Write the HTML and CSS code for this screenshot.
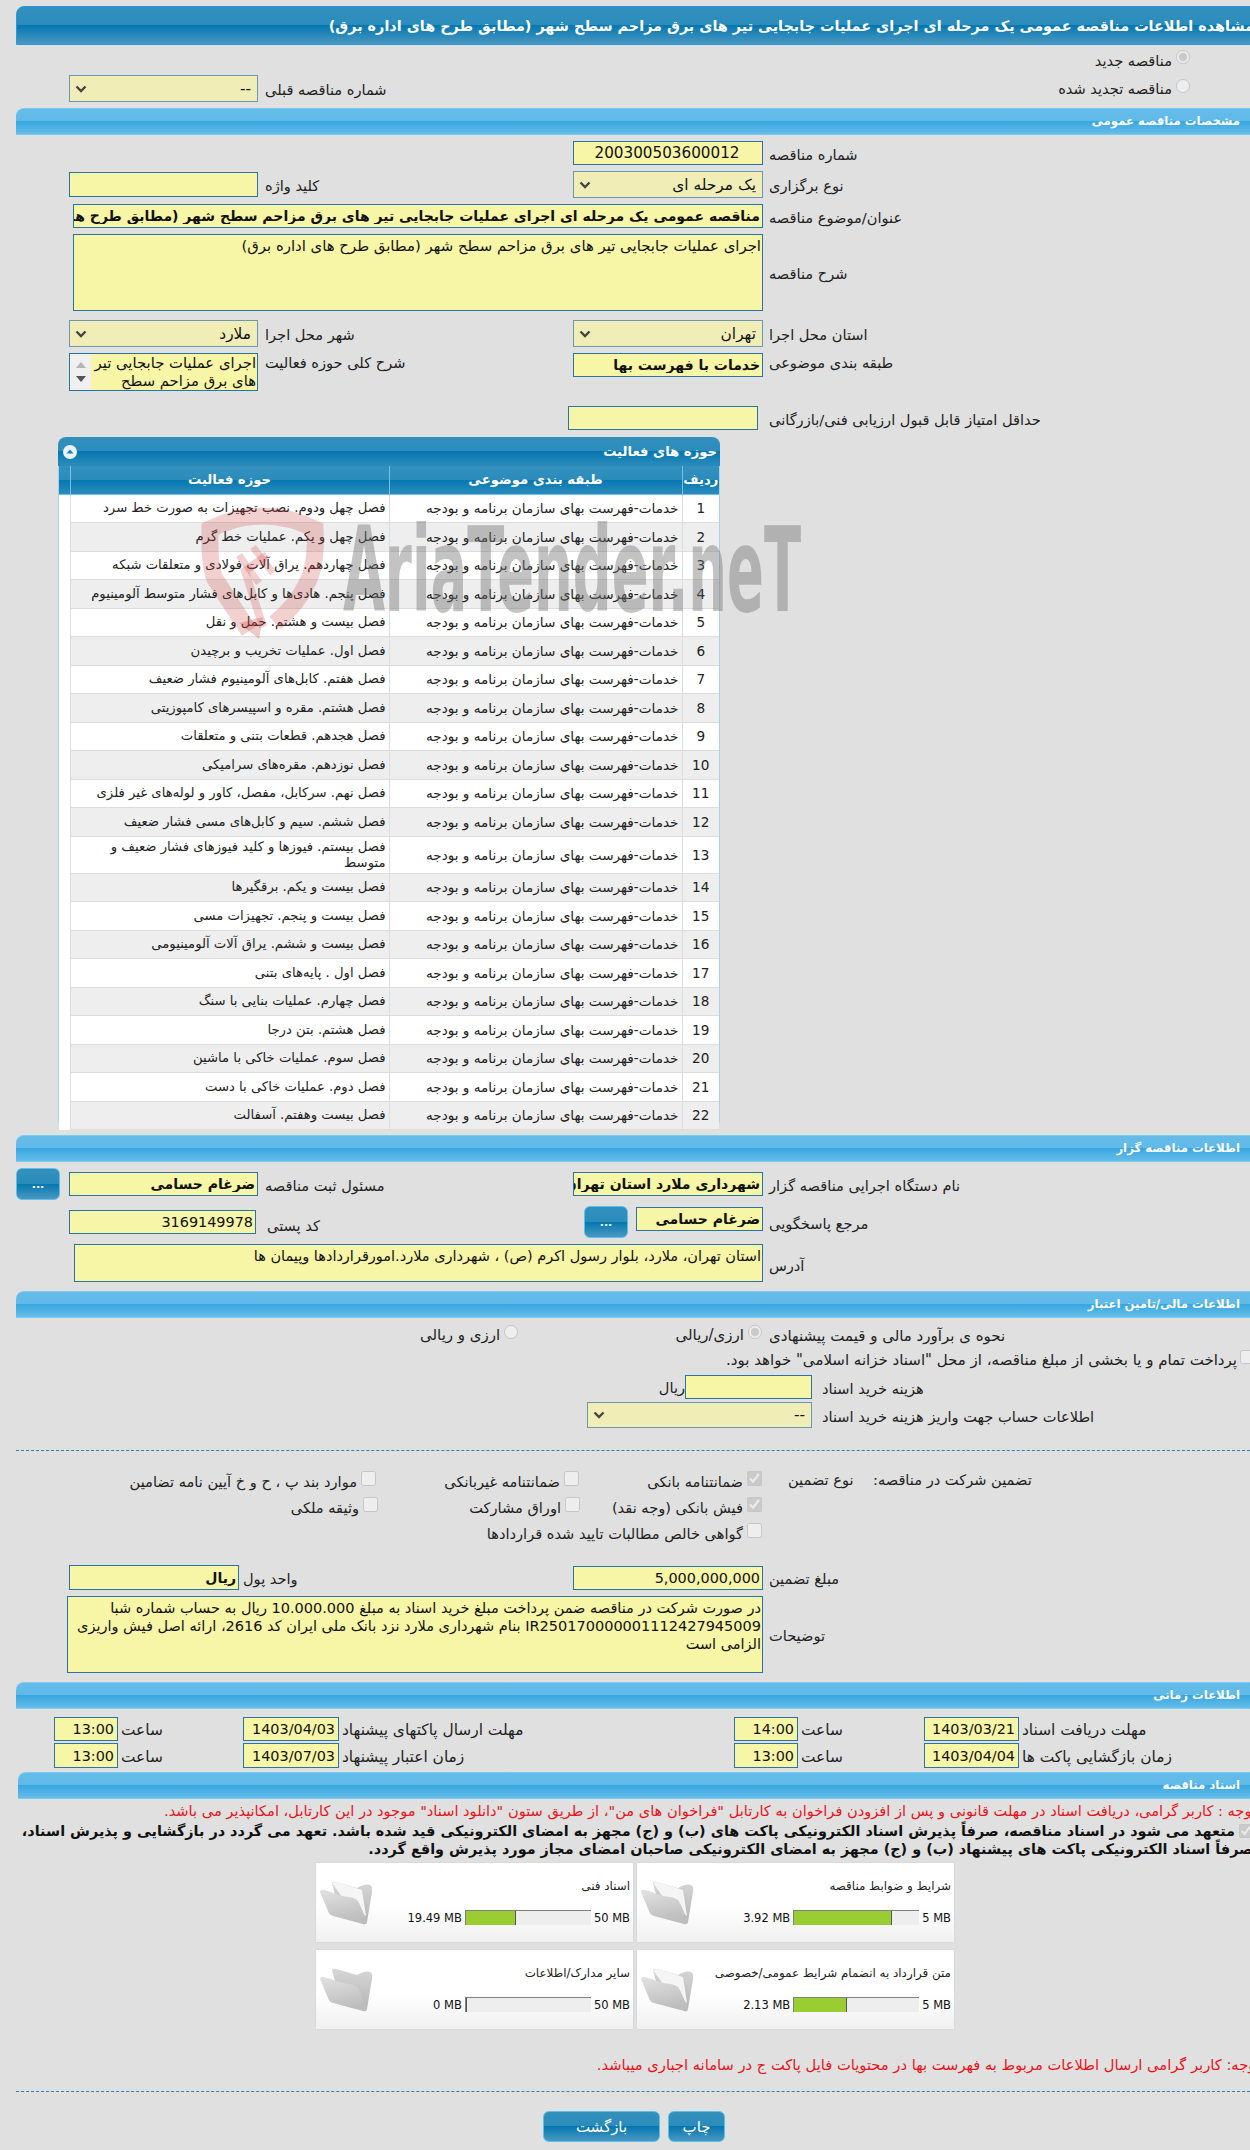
FILE: index.html
```html
<!DOCTYPE html>
<html lang="fa">
<head>
<meta charset="utf-8">
<title>مشاهده اطلاعات مناقصه</title>
<link rel="stylesheet" href="styles.css">
</head>
<body>
<svg class="defs" width="0" height="0" aria-hidden="true">
  <defs>
    <linearGradient id="fgFront" x1="0" y1="0" x2="0.3" y2="1"><stop offset="0" stop-color="#e2e2e2"/><stop offset="1" stop-color="#bdbdbd"/></linearGradient>
    <linearGradient id="fgBack" x1="0" y1="0" x2="0" y2="1"><stop offset="0" stop-color="#d6d6d6"/><stop offset="1" stop-color="#b4b4b4"/></linearGradient>
    <symbol id="folderFull" viewBox="0 0 54 46">
      <path d="M13 3 Q14 1 17 2 L31 6 Q34 7 38 8 Q46 3 51 5 Q54 6 53 12 L48 42 Q47 45 44 44 L20 30 Z" fill="url(#fgBack)"/>
      <path d="M13 3 L17 2 L43 10 L47 36 L25 20 Z" fill="#f5f5f5"/>
      <path d="M1 12 Q1 9 5 10 L12 12 Q20 16 30 17 Q38 18 40 23 L48 41 Q48 45 44 44 L14 36 Q10 35 9 31 Z" fill="url(#fgFront)"/>
    </symbol>
    <symbol id="folderEmpty" viewBox="0 0 54 46">
      <path d="M13 3 Q14 1 17 2 L31 6 Q34 7 38 8 Q46 3 51 5 Q54 6 53 12 L48 42 Q47 45 44 44 L20 30 Z" fill="url(#fgBack)"/>
      <path d="M1 12 Q1 9 5 10 L12 12 Q20 16 30 17 Q38 18 40 23 L48 41 Q48 45 44 44 L14 36 Q10 35 9 31 Z" fill="url(#fgFront)"/>
    </symbol>
  </defs>
</svg>

<div class="page">
  <div class="title-bar"><h1 class="title-text">مشاهده اطلاعات مناقصه عمومی یک مرحله ای اجرای عملیات جابجایی تیر های برق مزاحم سطح شهر (مطابق طرح های اداره برق)</h1></div>

  <div class="radio-row r-new">
    <label class="radio-label"><input type="radio" name="kind" checked disabled><span>مناقصه جدید</span></label>
  </div>
  <div class="form-row r-prev">
    <select class="sel c-left" disabled><option>--</option></select>
    <span class="lbl l-left">شماره مناقصه قبلی</span>
    <label class="radio-label end"><input type="radio" name="kind" disabled><span>مناقصه تجدید شده</span></label>
  </div>

  <div class="section-bar mt6">مشخصات مناقصه عمومی</div>

  <div class="form-row h24 mt6">
    <input class="fld num c-right" value="200300503600012" readonly dir="rtl">
    <span class="lbl l-right">شماره مناقصه</span>
  </div>
  <div class="form-row h27 mt6">
    <input class="fld c-left h25" readonly>
    <span class="lbl l-left">کلید واژه</span>
    <select class="sel c-right" disabled><option>یک مرحله ای</option></select>
    <span class="lbl l-right">نوع برگزاری</span>
  </div>
  <div class="form-row h24 mt6">
    <input class="fld c-wide bold" value="مناقصه عمومی یک مرحله ای اجرای عملیات جابجایی تیر های برق مزاحم سطح شهر (مطابق طرح های اداره برق)" readonly>
    <span class="lbl l-right">عنوان/موضوع مناقصه</span>
  </div>
  <div class="form-row h77 mt6">
    <textarea class="fld area c-wide" readonly>اجرای عملیات جابجایی تیر های برق مزاحم سطح شهر (مطابق طرح های اداره برق)</textarea>
    <span class="lbl l-right">شرح مناقصه</span>
  </div>
  <div class="form-row h27 mt9">
    <select class="sel c-left" disabled><option>ملارد</option></select>
    <span class="lbl l-left">شهر محل اجرا</span>
    <select class="sel c-right" disabled><option>تهران</option></select>
    <span class="lbl l-right">استان محل اجرا</span>
  </div>
  <div class="form-row h38 mt6 top">
    <div class="scopebox c-left">
      <div class="fake-scroll"><i class="arrow up"></i><i class="arrow down"></i></div>
      <div class="scope-text">اجرای عملیات جابجایی تیر های برق مزاحم سطح</div>
    </div>
    <span class="lbl l-left top-lbl">شرح کلی حوزه فعالیت</span>
    <input class="fld c-right bold" value="خدمات با فهرست بها" readonly>
    <span class="lbl l-right top-lbl">طبقه بندی موضوعی</span>
  </div>
  <div class="form-row h24 mt15">
    <input class="fld c-score" readonly>
    <span class="lbl l-right">حداقل امتیاز قابل قبول ارزیابی فنی/بازرگانی</span>
  </div>

  <section class="panel">
    <div class="panel-head">
      <span class="panel-title">حوزه های فعالیت</span>
      <span class="collapse"><svg width="14" height="14" viewBox="0 0 14 14"><circle cx="7" cy="7" r="7" fill="#e9f2f7"/><path d="M3.5 8.5 L7 4.5 L10.5 8.5 Z" fill="#1b7fb0"/></svg></span>
    </div>
    <table class="grid">
      <colgroup><col class="c1"><col class="c2"><col class="c3"><col class="c4"></colgroup>
      <thead><tr><th>ردیف</th><th>طبقه بندی موضوعی</th><th>حوزه فعالیت</th><th></th></tr></thead>
      <tbody>
        <tr><td class="n">1</td><td>خدمات-فهرست بهای سازمان برنامه و بودجه</td><td>فصل چهل ودوم. نصب تجهیزات به صورت خط سرد</td><td class="blank"></td></tr>
        <tr><td class="n">2</td><td>خدمات-فهرست بهای سازمان برنامه و بودجه</td><td>فصل چهل و یکم. عملیات خط گرم</td><td class="blank"></td></tr>
        <tr><td class="n">3</td><td>خدمات-فهرست بهای سازمان برنامه و بودجه</td><td>فصل چهاردهم. یراق آلات فولادی و متعلقات شبکه</td><td class="blank"></td></tr>
        <tr><td class="n">4</td><td>خدمات-فهرست بهای سازمان برنامه و بودجه</td><td>فصل پنجم. هادی‌ها و کابل‌های فشار متوسط آلومینیوم</td><td class="blank"></td></tr>
        <tr><td class="n">5</td><td>خدمات-فهرست بهای سازمان برنامه و بودجه</td><td>فصل بیست و هشتم. حمل و نقل</td><td class="blank"></td></tr>
        <tr><td class="n">6</td><td>خدمات-فهرست بهای سازمان برنامه و بودجه</td><td>فصل اول. عملیات تخریب و برچیدن</td><td class="blank"></td></tr>
        <tr><td class="n">7</td><td>خدمات-فهرست بهای سازمان برنامه و بودجه</td><td>فصل هفتم. کابل‌های آلومینیوم فشار ضعیف</td><td class="blank"></td></tr>
        <tr><td class="n">8</td><td>خدمات-فهرست بهای سازمان برنامه و بودجه</td><td>فصل هشتم. مقره و اسپیسرهای کامپوزیتی</td><td class="blank"></td></tr>
        <tr><td class="n">9</td><td>خدمات-فهرست بهای سازمان برنامه و بودجه</td><td>فصل هجدهم. قطعات بتنی و متعلقات</td><td class="blank"></td></tr>
        <tr><td class="n">10</td><td>خدمات-فهرست بهای سازمان برنامه و بودجه</td><td>فصل نوزدهم. مقره‌های سرامیکی</td><td class="blank"></td></tr>
        <tr><td class="n">11</td><td>خدمات-فهرست بهای سازمان برنامه و بودجه</td><td>فصل نهم. سرکابل، مفصل، کاور و لوله‌های غیر فلزی</td><td class="blank"></td></tr>
        <tr><td class="n">12</td><td>خدمات-فهرست بهای سازمان برنامه و بودجه</td><td>فصل ششم. سیم و کابل‌های مسی فشار ضعیف</td><td class="blank"></td></tr>
        <tr class="tall"><td class="n">13</td><td>خدمات-فهرست بهای سازمان برنامه و بودجه</td><td>فصل بیستم. فیوزها و کلید فیوزهای فشار ضعیف و متوسط</td><td class="blank"></td></tr>
        <tr><td class="n">14</td><td>خدمات-فهرست بهای سازمان برنامه و بودجه</td><td>فصل بیست و یکم. برقگیرها</td><td class="blank"></td></tr>
        <tr><td class="n">15</td><td>خدمات-فهرست بهای سازمان برنامه و بودجه</td><td>فصل بیست و پنجم. تجهیزات مسی</td><td class="blank"></td></tr>
        <tr><td class="n">16</td><td>خدمات-فهرست بهای سازمان برنامه و بودجه</td><td>فصل بیست و ششم. یراق آلات آلومینیومی</td><td class="blank"></td></tr>
        <tr><td class="n">17</td><td>خدمات-فهرست بهای سازمان برنامه و بودجه</td><td>فصل اول . پایه‌های بتنی</td><td class="blank"></td></tr>
        <tr><td class="n">18</td><td>خدمات-فهرست بهای سازمان برنامه و بودجه</td><td>فصل چهارم. عملیات بنایی با سنگ</td><td class="blank"></td></tr>
        <tr><td class="n">19</td><td>خدمات-فهرست بهای سازمان برنامه و بودجه</td><td>فصل هشتم. بتن درجا</td><td class="blank"></td></tr>
        <tr><td class="n">20</td><td>خدمات-فهرست بهای سازمان برنامه و بودجه</td><td>فصل سوم. عملیات خاکی با ماشین</td><td class="blank"></td></tr>
        <tr><td class="n">21</td><td>خدمات-فهرست بهای سازمان برنامه و بودجه</td><td>فصل دوم. عملیات خاکی با دست</td><td class="blank"></td></tr>
        <tr><td class="n">22</td><td>خدمات-فهرست بهای سازمان برنامه و بودجه</td><td>فصل بیست وهفتم. آسفالت</td><td class="blank"></td></tr>
      </tbody>
    </table>
    <svg class="watermark" width="610" height="145" viewBox="0 0 610 145" aria-hidden="true">
      <g fill="none" stroke="#c83c3c" stroke-opacity=".24">
        <path d="M48 132 L14 80 Q8 66 9 30 Q62 4 114 30 Q116 66 106 84 Q96 106 74 124" stroke-width="17"/>
        <path d="M66 56 L44 72 L62 128" stroke-width="8"/>
        <path d="M52 48 L72 74 M38 56 L58 84" stroke-width="7"/>
      </g>
      <path d="M38 124 L62 118 L58 140 Z" fill="#c83c3c" fill-opacity=".28"/>
      <text class="wm-text" x="142" y="112" textLength="458" lengthAdjust="spacingAndGlyphs">AriaTender.neT</text>
    </svg>
  </section>

  <div class="section-bar mt7">اطلاعات مناقصه گزار</div>

  <div class="form-row h32 mt6">
    <button class="dots c-btn" type="button">...</button>
    <input class="fld c-left bold" value="ضرغام حسامی" readonly>
    <span class="lbl l-left">مسئول ثبت مناقصه</span>
    <input class="fld c-right bold" value="شهرداری ملارد استان تهران" readonly>
    <span class="lbl l-right">نام دستگاه اجرایی مناقصه گزار</span>
  </div>
  <div class="form-row h32 mt6">
    <input class="fld c-post" value="3169149978" readonly>
    <span class="lbl l-post">کد پستی</span>
    <div class="ref-wrap">
      <button class="dots" type="button">...</button>
      <input class="fld ref-input bold" value="ضرغام حسامی" readonly>
    </div>
    <span class="lbl l-right">مرجع پاسخگویی</span>
  </div>
  <div class="form-row h38 mt6">
    <textarea class="fld area c-addr" readonly>استان تهران، ملارد، بلوار رسول اکرم (ص) ، شهرداری ملارد.امورقراردادها وپیمان ها</textarea>
    <span class="lbl l-right lower">آدرس</span>
  </div>

  <div class="section-bar mt9">اطلاعات مالی/تامین اعتبار</div>

  <div class="form-row h24 mt5 finance">
    <label class="radio-label fin-2"><input type="radio" name="cur" disabled><span>ارزی و ریالی</span></label>
    <label class="radio-label fin-1"><input type="radio" name="cur" checked disabled><span>ارزی/ریالی</span></label>
    <span class="lbl l-right">نحوه ی برآورد مالی و قیمت پیشنهادی</span>
  </div>
  <div class="treasury mt1">
    <input type="checkbox" disabled>
    <span>پرداخت تمام و یا بخشی از مبلغ مناقصه، از محل "اسناد خزانه اسلامی" خواهد بود.</span>
  </div>
  <div class="buy-row h24 mt3">
    <span class="unit">ریال</span>
    <input class="fld buy-field" readonly>
    <span class="lbl buy-lbl">هزینه خرید اسناد</span>
  </div>
  <div class="buy-row h26 mt3">
    <select class="sel buy-sel" disabled><option>--</option></select>
    <span class="lbl buy-lbl">اطلاعات حساب جهت واریز هزینه خرید اسناد</span>
  </div>

  <hr class="dotted d1">

  <div class="guarantee">
    <div class="g-row">
      <label class="chk g3"><input type="checkbox" disabled><span>موارد بند پ ، ح و خ آیین نامه تضامین</span></label>
      <label class="chk g2"><input type="checkbox" disabled><span>ضمانتنامه غیربانکی</span></label>
      <label class="chk g1"><input type="checkbox" checked disabled><span>ضمانتنامه بانکی</span></label>
      <span class="lbl g-type">نوع تضمین</span>
      <span class="lbl g-head">تضمین شرکت در مناقصه:</span>
    </div>
    <div class="g-row">
      <label class="chk g3 alt3"><input type="checkbox" disabled><span>وثیقه ملکی</span></label>
      <label class="chk g2 alt2"><input type="checkbox" disabled><span>اوراق مشارکت</span></label>
      <label class="chk g1"><input type="checkbox" checked disabled><span>فیش بانکی (وجه نقد)</span></label>
    </div>
    <div class="g-row">
      <label class="chk g-span"><input type="checkbox" disabled><span>گواهی خالص مطالبات تایید شده قراردادها</span></label>
    </div>
  </div>

  <div class="form-row h25 mt19">
    <input class="fld c-cur bold" value="ریال" readonly>
    <span class="lbl l-cur">واحد پول</span>
    <input class="fld c-right" value="5,000,000,000" readonly dir="rtl">
    <span class="lbl l-right">مبلغ تضمین</span>
  </div>
  <div class="form-row h77 mt6">
    <textarea class="fld area c-notes" readonly>در صورت شرکت در مناقصه ضمن پرداخت مبلغ خرید اسناد به مبلغ 10.000.000 ریال به حساب شماره شبا IR250170000001112427945009 بنام شهرداری ملارد نزد بانک ملی ایران کد 2616، ارائه اصل فیش واریزی الزامی است</textarea>
    <span class="lbl l-right">توضیحات</span>
  </div>

  <div class="section-bar mt9">اطلاعات زمانی</div>

  <div class="time-row mt8 h24">
    <span></span>
    <input class="fld" value="13:00" readonly dir="rtl"><span class="lbl">ساعت</span>
    <input class="fld" value="1403/04/03" readonly dir="rtl"><span class="lbl">مهلت ارسال پاکتهای پیشنهاد</span>
    <input class="fld" value="14:00" readonly dir="rtl"><span class="lbl">ساعت</span>
    <input class="fld" value="1403/03/21" readonly dir="rtl"><span class="lbl">مهلت دریافت اسناد</span>
  </div>
  <div class="time-row mt2 h25">
    <span></span>
    <input class="fld" value="13:00" readonly dir="rtl"><span class="lbl">ساعت</span>
    <input class="fld" value="1403/07/03" readonly dir="rtl"><span class="lbl">زمان اعتبار پیشنهاد</span>
    <input class="fld" value="13:00" readonly dir="rtl"><span class="lbl">ساعت</span>
    <input class="fld" value="1403/04/04" readonly dir="rtl"><span class="lbl">زمان بازگشایی پاکت ها</span>
  </div>

  <div class="section-bar mt4 docs-bar">اسناد مناقصه</div>

  <p class="red-note n1">توجه : کاربر گرامی، دریافت اسناد در مهلت قانونی و پس از افزودن فراخوان به کارتابل "فراخوان های من"، از طریق ستون "دانلود اسناد" موجود در این کارتابل، امکانپذیر می باشد.</p>
  <p class="pledge"><input type="checkbox" checked disabled>متعهد می شود در اسناد مناقصه، صرفاً پذیرش اسناد الکترونیکی پاکت های (ب) و (ج) مجهز به امضای الکترونیکی قید شده باشد. تعهد می گردد در بازگشایی و پذیرش اسناد،<br>صرفاً اسناد الکترونیکی پاکت های پیشنهاد (ب) و (ج) مجهز به امضای الکترونیکی صاحبان امضای مجاز مورد پذیرش واقع گردد.</p>

  <div class="cards">
    <article class="card">
      <svg class="folder" width="54" height="46"><use href="#folderFull"/></svg>
      <div class="card-body">
        <div class="card-title">اسناد فنی</div>
        <div class="usage"><span>19.49 MB</span><span class="bar"><i class="fill" style="width:40%"></i></span><span>50 MB</span></div>
      </div>
    </article>
    <article class="card">
      <svg class="folder" width="54" height="46"><use href="#folderFull"/></svg>
      <div class="card-body">
        <div class="card-title">شرایط و ضوابط مناقصه</div>
        <div class="usage"><span>3.92 MB</span><span class="bar"><i class="fill" style="width:78.4%"></i></span><span>5 MB</span></div>
      </div>
    </article>
    <article class="card">
      <svg class="folder" width="54" height="46"><use href="#folderEmpty"/></svg>
      <div class="card-body">
        <div class="card-title">سایر مدارک/اطلاعات</div>
        <div class="usage"><span>0 MB</span><span class="bar"><i class="fill" style="width:0%"></i></span><span>50 MB</span></div>
      </div>
    </article>
    <article class="card">
      <svg class="folder" width="54" height="46"><use href="#folderFull"/></svg>
      <div class="card-body">
        <div class="card-title">متن قرارداد به انضمام شرایط عمومی/خصوصی</div>
        <div class="usage"><span>2.13 MB</span><span class="bar"><i class="fill" style="width:42.6%"></i></span><span>5 MB</span></div>
      </div>
    </article>
  </div>

  <p class="red-note n2">توجه: کاربر گرامی ارسال اطلاعات مربوط به فهرست بها در محتویات فایل پاکت ج در سامانه اجباری میباشد.</p>

  <hr class="dotted d2">

  <div class="actions">
    <button class="btn wide-btn" type="button">بازگشت</button>
    <button class="btn" type="button">چاپ</button>
  </div>
</div>
</body>
</html>
```
FILE: styles.css
```css
* { box-sizing: border-box; }
html, body { margin: 0; padding: 0; overflow: hidden; height: 2150px; }
body {
  width: 1250px;
  background: #e0e0e0;
  color: #222;
  font-family: "DejaVu Sans", sans-serif;
  font-size: 14.6px;
}
.defs { position: absolute; }
.page { width: 1250px; padding: 6px 0 0 16px; }

.mt1 { margin-top: 1px; } .mt2 { margin-top: 2px; } .mt3 { margin-top: 3px; }
.mt4 { margin-top: 4px; } .mt5 { margin-top: 5px; } .mt6 { margin-top: 6px; }
.mt7 { margin-top: 7px; } .mt8 { margin-top: 8px; } .mt9 { margin-top: 9px; }
.mt15 { margin-top: 15px; } .mt19 { margin-top: 19px; }
.h24 { height: 24px; } .h25 { height: 25px; } .h26 { height: 26px; } .h27 { height: 27px; }
.h32 { height: 32px; } .h38 { height: 38px; } .h77 { height: 77px; }

/* bars */
.title-bar {
  width: 1250px;
  height: 39px;
  padding-right: 16px;
  direction: rtl;
  overflow: hidden;
  display: flex;
  align-items: center;
  border: 1px solid #2a97e0;
  border-radius: 8px 0 0 0;
  background: linear-gradient(#3390bd 0, #2b8cbb 49%, #0577b0 50%, #4a98c1 100%);
}
.title-text {
  margin: 0 -5px 0 0;
  white-space: nowrap;
  color: #fff;
  font-size: 14.4px;
  font-weight: bold;
}
.section-bar {
  width: 1234px;
  height: 27px;
  padding: 0 10px 0 0;
  direction: rtl;
  border-top: 1px solid #79cdf1;
  border-bottom: 1px solid #79cdf1;
  border-radius: 8px 0 0 0;
  background: linear-gradient(#65bce9 0, #60b9e8 49%, #38a7e0 50%, #65bde9 100%);
  color: #fff;
  font-weight: bold;
  font-size: 11.7px;
  line-height: 25px;
}
.docs-bar { margin-left: 2px; width: 1232px; }

/* forms */
.form-row {
  display: grid;
  grid-template-columns: 53px 189px 315px 190px 1fr;
  align-items: center;
}
.form-row.top { align-items: start; }
.fld, .sel {
  font-family: inherit;
  font-size: 14.4px;
  color: #111;
  direction: rtl;
  border: 1px solid #2a74a5;
  background: #f7f5a6;
  padding: 0 2px 0 0;
  height: 24px;
  width: 100%;
  border-radius: 0;
  outline: none;
}
.fld.h25 { height: 25px; }
.num { font-size: 15.2px; text-align: center; }
.bold { font-weight: bold; font-size: 14px; }
.area { resize: none; overflow: hidden; height: 100%; padding: 2px 1px 0 0; line-height: 18px; font-size: 14.9px; display: block; }
.sel {
  appearance: none;
  -webkit-appearance: none;
  opacity: 1;
  height: 27px;
  font-size: 15.4px;
  border-color: #6c97b3;
  background-color: #f0eeb6;
  padding-right: 6px;
  background-image: url("data:image/svg+xml,%3Csvg xmlns='http://www.w3.org/2000/svg' width='12' height='8'%3E%3Cpath d='M1.5 1.5 L6 6 L10.5 1.5' fill='none' stroke='%23444' stroke-width='2.4'/%3E%3C/svg%3E");
  background-repeat: no-repeat;
  background-position: 5px 50%;
}
.lbl { white-space: nowrap; direction: rtl; text-align: left; display: block; margin-top: 2px; }
.c-left { grid-column: 2; grid-row: 1; }
.c-right { grid-column: 4; grid-row: 1; }
.l-left { grid-column: 3; grid-row: 1; margin-left: 7px; }
.l-right { grid-column: 5; grid-row: 1; margin-left: 6px; }
.c-wide { grid-column: 2 / 5; grid-row: 1; margin-left: 4px; width: auto; }
.c-score { grid-column: 4; grid-row: 1; margin-left: -5px; }
.c-btn { grid-column: 1; grid-row: 1; margin-right: 9px; }
.top-lbl { margin-top: 1px; }
.lower { margin-top: 4px; }

.radio-row { display: flex; justify-content: flex-end; padding-right: 60px; }
.r-new { align-items: center; height: 20px; margin-top: 5px; }
.r-prev { height: 27px; margin-top: 5px; }
.radio-label { display: inline-flex; align-items: center; gap: 4px; direction: rtl; white-space: nowrap; }
.radio-label input { margin: -6px 0 0 0; width: 14px; height: 14px; }
.radio-label.end { grid-column: 5; grid-row: 1; justify-self: end; margin-right: 60px; }
.fin-1 { grid-column: 3 / 5; grid-row: 1; justify-self: end; margin-right: 1px; }
.fin-2 { grid-column: 2 / 4; grid-row: 1; justify-self: start; margin-left: 351px; }

.scopebox {
  height: 38px;
  border: 1px solid #2a74a5;
  background: #f7f5a6;
  display: flex;
  overflow: hidden;
}
.fake-scroll {
  flex: 0 0 21px;
  background: #f0f0f0;
  display: flex;
  flex-direction: column;
  align-items: center;
  justify-content: center;
  gap: 8px;
}
.arrow { width: 0; height: 0; border-left: 5px solid transparent; border-right: 5px solid transparent; display: block; }
.arrow.up { border-bottom: 6px solid #b4b4b4; }
.arrow.down { border-top: 6px solid #555; }
.scope-text { direction: rtl; flex: 1; font-size: 14.8px; line-height: 18px; padding: 0 1px 0 0; text-align: right; color: #111; }

.c-post { grid-column: 2; grid-row: 1; width: 187px; align-self: start; margin-top: 4px; }
.l-post { grid-column: 3; grid-row: 1; margin-left: 9px; margin-top: 6px; }
.ref-wrap { grid-column: 4 / 5; grid-row: 1; display: flex; justify-content: flex-end; gap: 8px; margin-left: -5px; align-items: flex-start; height: 32px; }
.ref-input { width: 127px; margin-top: 1px; }
.c-addr { grid-column: 2 / 5; grid-row: 1; margin-left: 5px; width: auto; font-size: 14.5px; }
.c-cur { grid-column: 2; grid-row: 1; width: 170px; height: 25px; }
.l-cur { grid-column: 2 / 4; grid-row: 1; margin-left: 174px; }
.c-notes { grid-column: 1 / 5; grid-row: 1; margin-left: 51px; width: auto; font-size: 14.5px; }

.dots {
  width: 44px;
  height: 32px;
  padding: 0;
  border: 1px solid #5cc0ec;
  border-radius: 6px;
  color: #fff;
  font-family: inherit;
  font-size: 11px;
  font-weight: bold;
  background: linear-gradient(#3390bd 0, #2b8cbb 49%, #0577b0 50%, #4a98c1 100%);
}
.finance { font-size: 15px; }
.treasury { display: flex; direction: rtl; align-items: center; height: 24px; gap: 3px; font-size: 15px; }
.treasury input { margin: -6px -4px 0 0; width: 14px; height: 14px; flex: none; }
.treasury span { white-space: nowrap; }
.buy-row { display: grid; grid-template-columns: 669px 127px 1fr; align-items: center; }
.unit { direction: rtl; text-align: left; margin-left: 646px; white-space: nowrap; }
.buy-field { grid-column: 2; }
.buy-sel { grid-column: 1 / 3; margin-left: 571px; width: 225px; height: 26px; }
.buy-lbl { margin-left: 10px; grid-column: 3; }
.dotted { border: 0; border-top: 1px dashed #2b84b8; margin: 0; width: 1234px; height: 0; }
.d1 { margin-top: 22px; }
.d2 { margin-top: 16px; }

.guarantee { margin-top: 17px; }
.g-row { display: grid; grid-template-columns: 360px 203px 183px 1fr; height: 26px; align-items: center; position: relative; }
.chk { display: flex; align-items: center; gap: 4px; white-space: nowrap; direction: rtl; justify-self: end; }
.chk input { margin: -6px 0 0 0; width: 15px; height: 15px; flex: none; }
.g-span { grid-column: 1 / 4; }
.g-type { position: absolute; left: 772px; top: 1px; }
.g-head { position: absolute; left: 857px; top: 1px; }
.alt2 { margin-right: -1px; }
.alt3 { margin-right: -2px; }

.time-row { display: grid; grid-template-columns: 38px 64px 125px 96px 395px 64px 126px 95px 1fr; align-items: center; }
.time-row .fld { height: 100%; padding-right: 3px; }
.time-row .lbl { margin-left: 3px; font-size: 15.4px; }

.red-note { margin: 0; color: #e8141a; direction: rtl; white-space: nowrap; }
.n1 { height: 24px; line-height: 24px; margin-right: -6px; }
.n2 { height: 20px; line-height: 20px; margin-top: 26px; margin-right: -10px; font-size: 14.7px; }
.pledge { margin: 0 -3px 0 0; direction: rtl; white-space: nowrap; font-weight: bold; color: #111; line-height: 17.5px; height: 35px; font-size: 14.4px; }
.pledge input { width: 14px; height: 14px; margin: 0 0 0 4px; vertical-align: -2px; }

.cards { display: grid; grid-template-columns: 317px 317px; gap: 8px 4px; margin: 5px 0 0 300px; }
.card {
  height: 79px;
  background: linear-gradient(#fff 55%, #f0f0f0);
  box-shadow: 0 0 2px #ccc;
  display: flex;
  align-items: flex-start;
  font-size: 11.5px;
}
.folder { margin: 17px 0 0 3px; flex: none; }
.card-body { flex: 1; padding: 0 3px 0 0; }
.card-title { direction: rtl; text-align: right; margin-top: 15px; font-size: 11.9px; white-space: nowrap; line-height: 16px; }
.usage { display: flex; justify-content: flex-end; align-items: center; gap: 2px; margin-top: 16px; color: #111; }
.bar { width: 126px; height: 15px; background: #eee; border-top: 1px solid #808080; border-left: 1px solid #808080; display: block; margin: 0 1px; }
.fill { display: block; height: 100%; background: #9acd32; border-right: 1px solid #555; }

.actions { display: flex; gap: 8px; margin: 19px 0 0 527px; }
.btn {
  width: 57px;
  height: 31px;
  padding: 0;
  border: 1px solid #5cc0ec;
  border-radius: 6px;
  color: #fff;
  font-family: inherit;
  font-size: 15px;
  background: linear-gradient(#3390bd 0, #2b8cbb 49%, #0577b0 50%, #4a98c1 100%);
}
.wide-btn { width: 117px; }

/* table panel */
.panel {
  position: relative;
  width: 662px;
  height: 691px;
  margin: 7px 0 0 42px;
  background: #fff;
  border: 1px solid #a9d3ea;
  border-top: 0;
  border-radius: 8px;
}
.panel-head {
  height: 29px;
  margin: 0 -1px;
  display: flex;
  direction: rtl;
  justify-content: space-between;
  align-items: center;
  padding: 0 3px 0 5px;
  color: #fff;
  font-weight: bold;
  font-size: 13.2px;
  border-radius: 8px 8px 0 0;
  background: linear-gradient(#3390bd 0, #2b8cbb 49%, #0577b0 50%, #2c8cbb 100%);
}
.collapse { display: flex; }
.grid { width: 660px; border-collapse: collapse; table-layout: fixed; direction: rtl; font-size: 13.2px; color: #222; }
.c1 { width: 37px; } .c2 { width: 293px; } .c3 { width: 319px; } .c4 { width: 11px; }
.grid th {
  height: 28px;
  padding: 0;
  color: #fff;
  font-size: 13.2px;
  font-weight: bold;
  border-left: 1px solid #74c2e8;
  border-bottom: 1px solid #6cc3ee;
  background: linear-gradient(#3390bd 0, #2b8cbb 49%, #0577b0 50%, #2c8cbb 100%);
}
.grid th:last-child { border-left: 0; }
.grid td {
  height: 28.5px;
  padding: 0 3px;
  text-align: right;
  line-height: 16px;
  border-bottom: 1px solid #ddd;
  border-left: 1px solid #ddd;
}
.grid .tall td { height: 37px; }
.grid td:nth-child(2) { font-size: 13.6px; }
.grid tbody tr:nth-child(even) td { background: #eee; }
.grid td.n { text-align: center; font-size: 13.6px; }
.grid td.blank, .grid tbody tr:nth-child(even) td.blank { background: #fff; border: 0; }
.watermark { position: absolute; left: 142px; top: 62px; pointer-events: none; overflow: visible; }
.wm-text { font-family: "DejaVu Sans", sans-serif; font-weight: bold; font-size: 118px; fill: #707070; fill-opacity: .42; }
```
